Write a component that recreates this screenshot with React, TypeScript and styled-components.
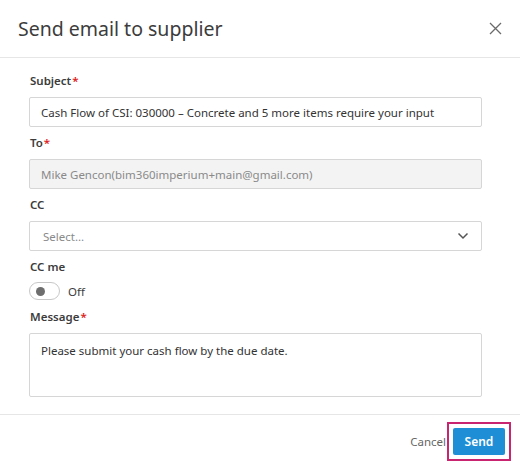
import React from "react";
import styled, { createGlobalStyle } from "styled-components";

const Global = createGlobalStyle`
  html, body { margin: 0; padding: 0; background: #ffffff; }
  body { font-family: "Noto Sans", "Open Sans", sans-serif; color: #3c3c3c; }
  * { box-sizing: border-box; }
`;

const Dialog = styled.div`
  width: 520px;
  height: 468px;
  display: flex;
  flex-direction: column;
  background: #fff;
`;

const Header = styled.div`
  height: 58px;
  display: flex;
  align-items: center;
  justify-content: space-between;
  padding: 0 18px 0 18px;
  border-bottom: 1px solid #e6e6e6;
`;

const Title = styled.h1`
  margin: 0;
  font-size: 19.5px;
  font-weight: 400;
  color: #3c3c3c;
`;

const CloseButton = styled.button`
  border: 0;
  background: none;
  padding: 0;
  width: 20px;
  height: 20px;
  display: flex;
  align-items: center;
  justify-content: center;
  margin-right: -3px;
`;

const Body = styled.div`
  flex: 1;
  display: flex;
  flex-direction: column;
  padding: 15px 38px 0 29px;
`;

const Field = styled.div`
  display: flex;
  flex-direction: column;
`;

const Label = styled.label`
  font-size: 11.5px;
  font-weight: 600;
  color: #3c3c3c;
  height: 16px;
  line-height: 16px;
  margin-bottom: 8px;
  padding-left: 1px;
`;

const Star = styled.span`
  color: #dd2222;
  margin-left: 1px;
`;

const Input = styled.div<{ $disabled?: boolean }>`
  height: 30px;
  border: 1px solid #d6d6d6;
  border-radius: 2px;
  background: ${(p) => (p.$disabled ? "#f3f3f3" : "#fff")};
  color: ${(p) => (p.$disabled ? "#8a8a8a" : "#333333")};
  font-size: 11.5px;
  display: flex;
  align-items: center;
  padding: 0 11px;
  margin-bottom: 8px;
  white-space: nowrap;
  overflow: hidden;
`;

const SelectBox = styled(Input)`
  justify-content: space-between;
  color: #8a8a8a;
  padding: 0 12px 0 13px;
`;

const ToggleRow = styled.div`
  display: flex;
  align-items: center;
  gap: 8px;
  height: 18px;
  margin-top: -1px;
  margin-bottom: 9px;
`;

const Track = styled.div`
  width: 31px;
  height: 18px;
  border: 1px solid #c8c8c8;
  border-radius: 9px;
  display: flex;
  align-items: center;
  padding-left: 6px;
`;

const Knob = styled.div`
  width: 9px;
  height: 9px;
  border-radius: 50%;
  background: #6e6e6e;
`;

const ToggleText = styled.span`
  font-size: 11.5px;
  color: #3c3c3c;
`;

const TextArea = styled.div`
  height: 64px;
  border: 1px solid #d6d6d6;
  border-radius: 2px;
  font-size: 11.5px;
  color: #333333;
  padding: 9px 11px;
`;

const Footer = styled.div`
  height: 54px;
  border-top: 1px solid #e6e6e6;
  display: flex;
  align-items: center;
  justify-content: flex-end;
  padding: 0 9px 0 0;
  gap: 1px;
`;

const CancelButton = styled.button`
  border: 0;
  background: none;
  font-family: inherit;
  font-size: 11.5px;
  color: #666;
  padding: 0;
`;

const Highlight = styled.div`
  border: 2px solid #c9246f;
  padding: 4px;
  display: flex;
`;

const SendButton = styled.button`
  border: 0;
  background: #1e8fd6;
  color: #fff;
  font-family: inherit;
  font-weight: 600;
  font-size: 12px;
  width: 52px;
  height: 27px;
  border-radius: 2px;
  padding: 0;
`;

export default function App() {
  return (
    <>
      <Global />
      <Dialog>
        <Header>
          <Title>Send email to supplier</Title>
          <CloseButton aria-label="Close">
            <svg width="13" height="13" viewBox="0 0 13 13">
              <path d="M1 1 L12 12 M12 1 L1 12" stroke="#6a6a6a" strokeWidth="1.3" fill="none" />
            </svg>
          </CloseButton>
        </Header>
        <Body>
          <Field>
            <Label>Subject<Star>*</Star></Label>
            <Input>Cash Flow of CSI: 030000 – Concrete and 5 more items require your input</Input>
          </Field>
          <Field>
            <Label>To<Star>*</Star></Label>
            <Input $disabled>Mike Gencon(bim360imperium+main@gmail.com)</Input>
          </Field>
          <Field>
            <Label>CC</Label>
            <SelectBox>
              <span>Select...</span>
              <svg width="12" height="8" viewBox="0 0 12 8">
                <path d="M1.5 1.5 L6 6 L10.5 1.5" stroke="#555" strokeWidth="1.5" fill="none" />
              </svg>
            </SelectBox>
          </Field>
          <Field>
            <Label>CC me</Label>
            <ToggleRow>
              <Track><Knob /></Track>
              <ToggleText>Off</ToggleText>
            </ToggleRow>
          </Field>
          <Field>
            <Label>Message<Star>*</Star></Label>
            <TextArea>Please submit your cash flow by the due date.</TextArea>
          </Field>
        </Body>
        <Footer>
          <CancelButton>Cancel</CancelButton>
          <Highlight>
            <SendButton>Send</SendButton>
          </Highlight>
        </Footer>
      </Dialog>
    </>
  );
}
